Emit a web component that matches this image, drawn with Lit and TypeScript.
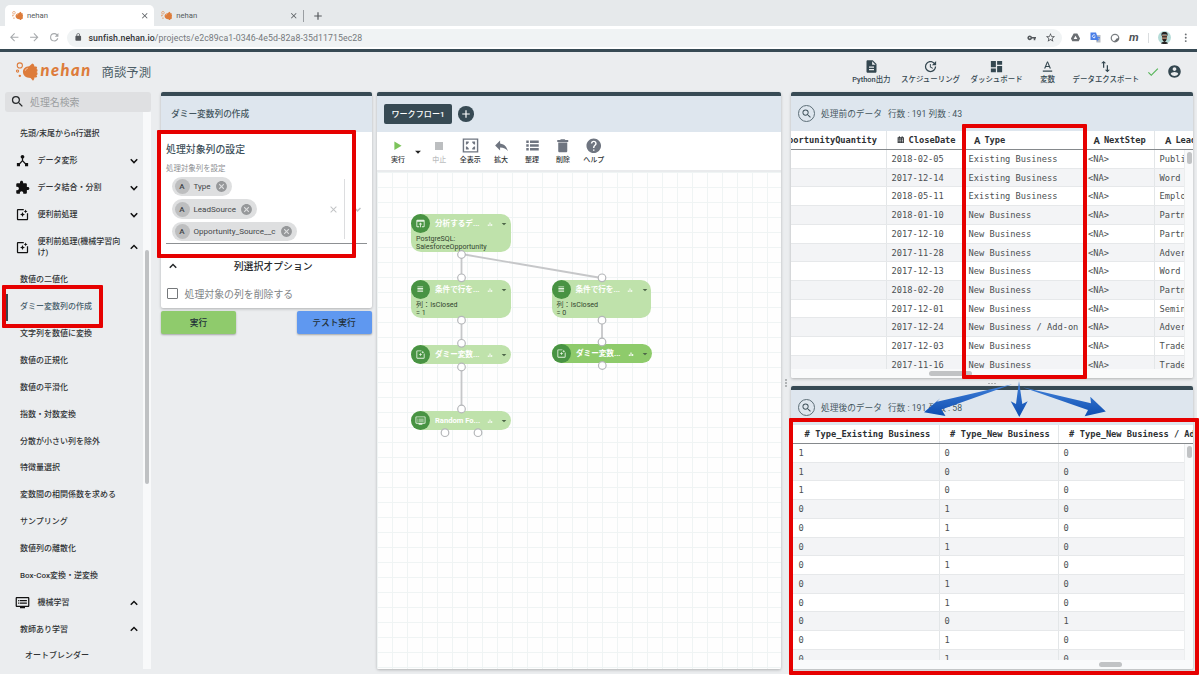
import { LitElement, css, html, svg } from 'lit'
import { customElement, property } from 'lit/decorators.js'
import { classMap } from 'lit/directives/class-map.js'

const ICONS: Record<string, string> = {
  search: 'M15.5 14h-.79l-.28-.27A6.471 6.471 0 0 0 16 9.5 6.5 6.5 0 1 0 9.5 16c1.61 0 3.09-.59 4.23-1.57l.27.28v.79l5 4.99L20.49 19l-4.99-5zm-6 0C7.01 14 5 11.99 5 9.5S7.01 5 9.5 5 14 7.01 14 9.5 11.99 14 9.5 14z',
  file: 'M14 2H6c-1.1 0-1.99.9-1.99 2L4 20c0 1.1.89 2 1.99 2H18c1.1 0 2-.9 2-2V8l-6-6zm2 16H8v-2h8v2zm0-4H8v-2h8v2zm-3-5V3.5L18.5 9H13z',
  schedule: 'M21 10.12h-6.78l2.74-2.82c-2.73-2.7-7.15-2.8-9.88-.1-2.73 2.71-2.73 7.08 0 9.79s7.15 2.71 9.88 0C18.32 15.65 19 14.08 19 12.1h2c0 1.98-.88 4.55-2.64 6.29-3.51 3.48-9.21 3.48-12.72 0-3.5-3.47-3.53-9.11-.02-12.58s9.14-3.47 12.65 0L21 3v7.12zM12.5 8v4.25l3.5 2.08-.72 1.21L11 13V8h1.5z',
  dashboard: 'M3 13h8V3H3v10zm0 8h8v-6H3v6zm10 0h8V11h-8v10zm0-18v6h8V3h-8z',
  variable: 'M4.500 18.500v2h15v-2h-15zM9.500 12.800h5l.9 2.200h2.100L12.750 4h-1.500L6.500 15h2.100l.9-2.200zM12 5.980L13.870 11h-3.740L12 5.980z',
  transfer: 'M9 3L5 6.99h3V14h2V6.99h3L9 3zm7 14.01V10h-2v7.01h-3L15 21l4-3.99h-3z',
  check: 'M9 16.17L4.83 12l-1.42 1.41L9 19 21 7l-1.41-1.41z',
  account: 'M12 2C6.48 2 2 6.48 2 12s4.48 10 10 10 10-4.48 10-10S17.52 2 12 2zm0 3c1.66 0 3 1.34 3 3s-1.34 3-3 3-3-1.34-3-3 1.34-3 3-3zm0 14.2c-2.5 0-4.71-1.28-6-3.22.03-1.99 4-3.08 6-3.08 1.99 0 5.97 1.09 6 3.08-1.29 1.94-3.5 3.22-6 3.22z',
  puzzle: 'M20.5 11H19V7c0-1.1-.9-2-2-2h-4V3.5C13 2.12 11.88 1 10.5 1S8 2.12 8 3.5V5H4c-1.1 0-1.99.9-1.99 2v3.8H3.5c1.49 0 2.7 1.21 2.7 2.7s-1.21 2.7-2.7 2.7H2V20c0 1.1.9 2 2 2h3.8v-1.5c0-1.49 1.21-2.7 2.7-2.7 1.49 0 2.7 1.21 2.7 2.7V22H17c1.1 0 2-.9 2-2v-4h1.5c1.38 0 2.5-1.12 2.5-2.5S21.88 11 20.5 11z',
  hub: 'M17 16l-4-4V8.82C14.16 8.4 15 7.3 15 6c0-1.66-1.34-3-3-3S9 4.34 9 6c0 1.3.84 2.4 2 2.82V12l-4 4H3v5h5v-3.05l4-4.2 4 4.2V21h5v-5h-4z',
  filter: 'M19.02 10v9H5V5h9V3H5.02c-1.1 0-2 .9-2 2v14c0 1.1.9 2 2 2H19c1.1 0 2-.9 2-2v-9h-1.98zM17 10l.94-2.06L20 7l-2.06-.94L17 4l-.94 2.06L14 7l2.06.94zm-3.75.75L12 8l-1.25 2.75L8 12l2.75 1.25L12 16l1.25-2.75L16 12z',
  monitor: 'M21 3H3c-1.1 0-2 .9-2 2v12c0 1.1.9 2 2 2h5v2h8v-2h5c1.1 0 1.99-.9 1.99-2L23 5c0-1.1-.9-2-2-2zm0 14H3V5h18v12zm-2-9H8v2h11V8zm0 4H8v2h11v-2zM7 8H5v2h2V8zm0 4H5v2h2v-2z',
  down: 'M16.59 8.09L12 12.67 7.41 8.09 5.5 10l6.5 6.5 6.5-6.5z',
  up: 'M12 7.5L5.5 14l1.91 1.91L12 11.33l4.59 4.58L18.5 14z',
  cancel: 'M12 2C6.47 2 2 6.47 2 12s4.47 10 10 10 10-4.47 10-10S17.53 2 12 2zm5 13.59L15.59 17 12 13.41 8.41 17 7 15.59 10.59 12 7 8.41 8.41 7 12 10.59 15.59 7 17 8.41 13.41 12 17 15.59z',
  close: 'M19 6.41L17.59 5 12 10.59 6.41 5 5 6.41 10.59 12 5 17.59 6.41 19 12 13.41 17.59 19 19 17.59 13.41 12z',
  reply: 'M10 9V5l-7 7 7 7v-4.1c5 0 8.5 1.6 11 5.1-1-5-4-10-11-11z',
  list: 'M2 14h4v-4H2v4zm0 6h4v-4H2v4zM2 8h4V4H2v4zm6 6h14v-4H8v4zm0 6h14v-4H8v4zM8 4v4h14V4H8z',
  trash: 'M5 20c0 1.1.9 2 2 2h10c1.1 0 2-.9 2-2V7H5v13zM20.5 3H16l-1-1H9L8 3H3.500v3h17V3z',
  help: 'M12 2C6.48 2 2 6.48 2 12s4.48 10 10 10 10-4.48 10-10S17.52 2 12 2zm1 17h-2v-2h2v2zm2.07-7.75l-.9.92C13.45 12.9 13 13.5 13 15h-2v-.5c0-1.1.45-2.1 1.17-2.83l1.24-1.26c.37-.36.59-.86.59-1.41 0-1.1-.9-2-2-2s-2 .9-2 2H8c0-2.21 1.79-4 4-4s4 1.79 4 4c0 .88-.36 1.68-.93 2.25z',
  play: 'M5 3v18l15-9z',
  stop: 'M4 4h16v16H4z',
  fit: 'M1 2h22v20H1V2zm2 2v16h18V4H3zm2.500 2.500h4V8L7 10.500H5.500v-4zm9 0h4v4H17L14.500 8V6.500zm-9 7H7L9.500 16v1.500h-4v-4zm11.500 0h1.500v4h-4V16l2.500-2.500z',
  plus: 'M19.5 13.2h-6.3v6.3h-2.4v-6.3H4.5v-2.4h6.3V4.5h2.4v6.3h6.3z',
  caret: 'M5 9l7 7 7-7z',
  back: 'M20 11H7.83l5.59-5.59L12 4l-8 8 8 8 1.41-1.41L7.83 13H20v-2z',
  forward: 'M12 4l-1.41 1.41L16.17 11H4v2h12.17l-5.58 5.59L12 20l8-8z',
  refresh: 'M17.65 6.35A7.958 7.958 0 0 0 12 4a8 8 0 1 0 7.73 10h-2.08A5.99 5.99 0 0 1 12 18a6 6 0 1 1 0-12c1.66 0 3.14.69 4.22 1.78L13 11h7V4l-2.35 2.35z',
  lock: 'M18 8h-1V6c0-2.76-2.24-5-5-5S7 3.24 7 6v2H6c-1.1 0-2 .9-2 2v10c0 1.1.9 2 2 2h12c1.1 0 2-.9 2-2V10c0-1.1-.9-2-2-2zM15.1 8H8.9V6c0-1.71 1.39-3.1 3.1-3.1s3.1 1.39 3.1 3.1v2z',
  key: 'M12.65 10A5.99 5.99 0 0 0 7 6c-3.31 0-6 2.69-6 6s2.69 6 6 6a5.99 5.99 0 0 0 5.65-4H17v4h4v-4h2v-4H12.65zM7 14a2 2 0 1 1 0-4 2 2 0 0 1 0 4z',
  star: 'M22 9.24l-7.19-.62L12 2 9.19 8.63 2 9.24l5.46 4.73L5.82 21 12 17.27 18.18 21l-1.63-7.03L22 9.24zM12 15.4l-3.76 2.27 1-4.28-3.32-2.88 4.38-.38L12 6.1l1.71 4.04 4.38.38-3.32 2.88 1 4.28L12 15.4z',
  more: 'M12 7a2 2 0 1 0 0-4 2 2 0 0 0 0 4zm0 3a2 2 0 1 0 0 4 2 2 0 0 0 0-4zm0 7a2 2 0 1 0 0 4 2 2 0 0 0 0-4z',
  open: 'M19 4H5a2 2 0 0 0-2 2v12a2 2 0 0 0 2 2h4v-2H5V8h14v10h-4v2h4c1.1 0 2-.9 2-2V6a2 2 0 0 0-2-2zm-7 6l-4 4h3v6h2v-6h3l-4-4z',
  lines: 'M4 4h16v2.500H4zM4 8.500h16V11H4zM4 13h16v2.500H4zM4 17.500h16V20H4z',
  bars: 'M3 20v-6h5v6zM9.5 20V6h5v14zM16 20v-8h5v8z',
  calendar: 'M6 1h3v3h6V1h3v3h4v18H2V4h4zM5 8v3h3V8zm5.5 0v3h3V8zM16 8v3h3V8zM5 13v2.5h3V13zm5.500 0v2.500h3V13zM16 13v2.500h3V13zM5 17.500V20h3v-2.500zm5.500 0V20h3v-2.500zm5.500 0V20h3v-2.500z',
  drive: 'M8 3h8l6 11-3 6H5l-3-6zM12 8l-4 7h8z',
};

const icon = (name: string, size: number) => html`
  <svg class="icon" width=${size} height=${size} viewBox="0 0 24 24" fill="currentColor">
    <path fill-rule="evenodd" d=${ICONS[name]}></path>
  </svg>`;

const fish = (size: number) => html`
  <svg class="icon" width=${size} height=${size * 0.87} viewBox="0 0 62 54">
    <g fill="none" stroke="#dd7c3b" stroke-width="3">
      <circle cx="11" cy="10" r="7.500"></circle>
      <circle cx="4.500" cy="26" r="3.200"></circle>
    </g>
    <circle cx="11" cy="40" r="3.500" fill="#dd7c3b"></circle>
    <path fill="#dd7c3b" d="M20 28c0-9 7-15 18-16l9-8c4 1 6 4 6 9h5c2 1 3 2 3 4l-2 3 3 2v5l-3 2 3 2v5l-3 2 2 3c0 2-1 3-3 4h-5c0 4-1 7-4 9l-7-8c-14 0-22-8-22-18z"></path>
    <path fill="none" stroke="#f6d5bd" stroke-width="2.500" d="M27 25c1-4 3-6 7-7"></path>
  </svg>`;

@customElement('data-table')
export class DataTable extends LitElement {
  @property({ attribute: false }) columns: { icon: string, label: string, width: number }[] = [];
  @property({ attribute: false }) rows: string[][] = [];
  @property({ type: Number }) thumbLeft = 0;
  @property({ type: Number }) thumbWidth = 0;

  renderMark(mark: string) {
    if (mark === 'calendar') return icon('calendar', 7.5);
    return mark ? html`<span class=${mark === 'A' ? 'mark' : 'hash'}>${mark}</span>` : '';
  }

  render() {
    const template = `grid-template-columns: ${this.columns.map((c) => c.width + 'px').join(' ')}`;
    return html`
      <div class="head row" style=${template}>
        ${this.columns.map((c) => html`
          <div class=${classMap({ cell: true, th: true, cut: !c.icon })}>${this.renderMark(c.icon)}<span>${c.label}</span></div>
        `)}
      </div>
      <div class="view">
        <div class="rows">
          ${this.rows.map((row) => html`
            <div class="row line" style=${template}>
              ${row.map((value) => html`<div class="cell">${value}</div>`)}
            </div>
          `)}
        </div>
        <div class="vbar"><div class="vthumb"></div></div>
      </div>
      <div class="hbar">
        <div class="hthumb" style=${`margin-left: ${this.thumbLeft}px; width: ${this.thumbWidth}px`}></div>
      </div>
    `;
  }

  static styles = css`
    :host {
      display: flex;
      flex: 1;
      flex-direction: column;
      min-height: 0;
      overflow: hidden;
      font: 8.7px "DejaVu Sans Mono", "Liberation Mono", monospace;
      color: #4b4f52;
    }
    .row {
      display: grid;
    }
    .cell {
      border-left: 1px solid #e3e6e8;
      box-sizing: border-box;
      overflow: hidden;
      padding-left: 4.5px;
      white-space: nowrap;
    }
    .cell:first-child {
      border-left: none;
      padding-left: 8px;
    }
    .head {
      border-bottom: 1.5px solid #85898c;
      color: #2c3033;
      flex: none;
      font-weight: bold;
      height: 18px;
      line-height: 19px;
    }
    .th, .th:first-child {
      align-items: center;
      display: flex;
      gap: 4px;
      padding-left: 10px;
    }
    .th:first-child {
      padding-left: 14px;
    }
    .th.cut {
      justify-content: flex-end;
      padding: 0 9px 0 0;
    }
    .mark {
      font: bold 9.5px Roboto, sans-serif;
    }
    .hash {
      margin-right: 1.5px;
    }
    .view {
      display: flex;
      flex: 1;
      min-height: 0;
    }
    .rows {
      flex: 1;
      overflow: hidden;
    }
    .line {
      background: white;
      border-bottom: 1px solid #e6e8ea;
      box-sizing: border-box;
      height: 18.72px;
      line-height: 18.5px;
    }
    .line:nth-child(even) {
      background: #f3f4f6;
    }
    .vbar {
      background: #f9fafb;
      border-left: 1px solid #eceeef;
      box-sizing: border-box;
      flex: none;
      padding: 2px;
      width: 9.5px;
    }
    .vthumb {
      background: #c1c3c5;
      border-radius: 3px;
      height: 11.5px;
      width: 5px;
    }
    .hbar {
      background: #f9fafb;
      box-sizing: border-box;
      flex: none;
      height: 9px;
      padding-top: 2px;
    }
    .hthumb {
      background: #c1c3c5;
      border-radius: 3px;
      height: 5px;
    }
  `;
}

@customElement('app-root')
export class AppRoot extends LitElement {
  actions = [
    ['file', 'Python出力'],
    ['schedule', 'スケジューリング'],
    ['dashboard', 'ダッシュボード'],
    ['variable', '変数'],
    ['transfer', 'データエクスポート'],
  ];

  menu = [
    { label: '先頭/末尾からn行選択' },
    { label: 'データ変形', icon: 'hub', arrow: 'down' },
    { label: 'データ結合・分割', icon: 'puzzle', arrow: 'down' },
    { label: '便利前処理', icon: 'filter', arrow: 'down' },
    { label: '便利前処理(機械学習向け)', icon: 'filter', arrow: 'up', tall: true },
    { label: '数値の二値化' },
    { label: 'ダミー変数列の作成', active: true },
    { label: '文字列を数値に変換' },
    { label: '数値の正規化' },
    { label: '数値の平滑化' },
    { label: '指数・対数変換' },
    { label: '分散が小さい列を除外' },
    { label: '特徴量選択' },
    { label: '変数間の相関係数を求める' },
    { label: 'サンプリング' },
    { label: '数値列の離散化' },
    { label: 'Box-Cox変換・逆変換' },
    { label: '機械学習', icon: 'monitor', arrow: 'up' },
    { label: '教師あり学習', arrow: 'up' },
    { label: 'オートブレンダー', nested: true },
  ];

  tools = [
    { icon: 'stop', label: '中止', kind: 'disabled', size: 12 },
    { icon: 'fit', label: '全表示', kind: '', size: 17 },
    { icon: 'reply', label: '拡大', kind: '', size: 17 },
    { icon: 'list', label: '整理', kind: '', size: 15 },
    { icon: 'trash', label: '削除', kind: '', size: 15.5 },
    { icon: 'help', label: 'ヘルプ', kind: '', size: 17.5 },
  ];

  // positions are relative to the top left corner of the canvas
  nodes = [
    { x: 34.5, y: 42, h: 38, icon: 'open', title: '分析するデ...', note: ['PostgreSQL:', 'SalesforceOpportunity'] },
    { x: 34.5, y: 108, h: 37.5, icon: 'lines', title: '条件で行を...', note: ['列：IsClosed', '= 1'] },
    { x: 175, y: 108, h: 37.5, icon: 'lines', title: '条件で行を...', note: ['列：IsClosed', '= 0'] },
    { x: 34.5, y: 173.3, h: 19, icon: 'filter', title: 'ダミー変数...', note: [] },
    { x: 175.5, y: 172.3, h: 19, icon: 'filter', title: 'ダミー変数...', note: [], active: true },
    { x: 34.5, y: 239, h: 19, icon: 'monitor', title: 'Random Fo...', note: [] },
  ];

  links = [[84.5, 82, 84.5, 106], [84.5, 82, 224.5, 106], [84.5, 148, 84.5, 171], [225, 148, 225, 170], [84.5, 195, 84.5, 237]];

  ports = [
    [84.5, 82.5], [84.5, 105.8], [225, 105.8], [84.5, 148.2], [225, 148.2], [84.5, 171.3],
    [225, 170], [84.5, 195], [225.3, 193.5], [84.5, 237], [68, 260.7], [101, 260.7],
  ];

  beforeColumns = [
    { icon: '', label: 'OpportunityQuantity', width: 95.5 },
    { icon: 'calendar', label: 'CloseDate', width: 77 },
    { icon: 'A', label: 'Type', width: 119.5 },
    { icon: 'A', label: 'NextStep', width: 71.5 },
    { icon: 'A', label: 'LeadSource', width: 80 },
  ];

  beforeRows = [
    ['', '2018-02-05', 'Existing Business', '<NA>', 'Public Relations'],
    ['', '2017-12-14', 'Existing Business', '<NA>', 'Word of mouth'],
    ['', '2018-05-11', 'Existing Business', '<NA>', 'Employee Referral'],
    ['', '2018-01-10', 'New Business', '<NA>', 'Partner'],
    ['', '2017-12-10', 'New Business', '<NA>', 'Partner'],
    ['', '2017-11-28', 'New Business', '<NA>', 'Advertisement'],
    ['', '2017-12-13', 'New Business', '<NA>', 'Word of mouth'],
    ['', '2018-02-20', 'New Business', '<NA>', 'Partner'],
    ['', '2017-12-01', 'New Business', '<NA>', 'Seminar'],
    ['', '2017-12-24', 'New Business / Add-on', '<NA>', 'Advertisement'],
    ['', '2017-12-03', 'New Business', '<NA>', 'Trade Show'],
    ['', '2017-11-16', 'New Business', '<NA>', 'Trade Show'],
  ];

  afterColumns = [
    { icon: '#', label: 'Type_Existing Business', width: 148.5 },
    { icon: '#', label: 'Type_New Business', width: 119 },
    { icon: '#', label: 'Type_New Business / Add-on', width: 160 },
  ];

  afterRows = ['100', '100', '100', '010', '010', '010', '010', '010', '010', '001', '010', '010'].map((r) => r.split(''));

  renderTab(active: boolean) {
    return html`
      <div class=${classMap({ tab: true, active })}>
        ${fish(11)}<span class="tab-name">nehan</span>${icon('close', 9.5)}
      </div>
    `;
  }

  renderBrowser() {
    return html`
      <div class="tabs">
        ${this.renderTab(true)}
        ${this.renderTab(false)}
        <span class="tab-line"></span>
        ${icon('plus', 12)}
      </div>
      <div class="nav">
        <div class="nav-buttons">${icon('back', 12.5)}${icon('forward', 12.5)}${icon('refresh', 12.5)}</div>
        <div class="url">
          ${icon('lock', 8.5)}
          <span class="address"><b>sunfish.nehan.io</b>/projects/e2c89ca1-0346-4e5d-82a8-35d11715ec28</span>
          ${icon('key', 9.5)}${icon('star', 11)}
        </div>
        <div class="extensions">
          <span class="gray">${icon('drive', 11)}</span>
          <svg class="icon" width="11" height="11" viewBox="0 0 22 22">
            <path fill="#b9bec4" d="M9 6h12v15H13z"></path>
            <path fill="#4a7fe8" d="M1 1h11l5 15H1z"></path>
            <path fill="none" stroke="white" stroke-width="1.6" d="M10.5 7a3 3 0 1 0 0 3H8"></path>
            <path fill="none" stroke="#4a7fe8" stroke-width="1.5" d="M13 11h7M16.5 9v2M14 18c3-1 4-4 4.5-7"></path>
          </svg>
          <svg class="icon" width="10" height="10" viewBox="0 0 20 20">
            <circle cx="10" cy="10" r="7.5" fill="none" stroke="#7b7f83" stroke-width="2.5"></circle>
            <path fill="#6a6e72" d="M7 17c5 2 11-1 11-7l-5 1-2 3z"></path>
          </svg>
          <span class="letter">m</span>
          <span class="nav-line"></span>
          <svg class="icon" width="13" height="13" viewBox="0 0 26 26">
            <circle cx="13" cy="13" r="13" fill="#b5dcd8"></circle>
            <path fill="#a07c66" d="M8 8h10v8l-5 6-5-5z"></path>
            <path fill="#262322" d="M7 10c-1-7 2-8 6-8s7 1 6 8l-2-3H9zM8 10.5h10v2H8zM9 16h8l-1 4-3 2-3-2zM6 25c1-3 3-3 7-3s6 0 7 3c-4 1.500-10 1.500-14 0z"></path>
          </svg>
          <span class="gray">${icon('more', 11.5)}</span>
        </div>
      </div>
    `;
  }

  renderHeader() {
    return html`
      <header class="header">
        ${fish(21.5)}
        <span class="logo">nehan</span>
        <span class="project">商談予測</span>
        <div class="actions">
          ${this.actions.map(([name, label]) => html`
            <div class="action">${icon(name, 15)}<span>${label}</span></div>
          `)}
        </div>
        <span class="saved">${icon('check', 14)}</span>
        ${icon('account', 15)}
      </header>
    `;
  }

  renderSidebar() {
    return html`
      <aside class="sidebar">
        <div class="search">${icon('search', 15)}<span>処理名検索</span></div>
        <div class="menu-wrap">
          <div class="menu">
            ${this.menu.map((item) => html`
              <div class=${classMap({ item: true, group: !!item.icon, tall: !!item.tall, current: !!item.active, nested: !!item.nested })}>
                ${item.icon ? icon(item.icon, 15) : ''}
                <span class="item-label">${item.label}</span>
                ${item.arrow ? icon(item.arrow, 14) : ''}
              </div>
            `)}
          </div>
          <div class="menu-track"><div class="menu-thumb"></div></div>
        </div>
      </aside>
    `;
  }

  renderSettings() {
    return html`
      <section class="settings">
        <div class="card">
          <div class="card-head settings-head">ダミー変数列の作成</div>
          <div class="form">
            <h3 class="form-title">処理対象列の設定</h3>
            <div class="form-label">処理対象列を設定</div>
            <div class="select">
              <div class="chips">
                ${['Type', 'LeadSource', 'Opportunity_Source__c'].map((name) => html`
                  <div class="chip"><span class="chip-mark">A</span><span>${name}</span>${icon('cancel', 13)}</div>
                `)}
              </div>
              <span class="clear">${icon('close', 11)}</span>
              <span class="divider"></span>
              <span class="clear">${icon('down', 13)}</span>
            </div>
            <div class="option-head">${icon('up', 14)}<span class="option-title">列選択オプション</span></div>
            <div class="option"><span class="box"></span>処理対象の列を削除する</div>
          </div>
        </div>
        <div class="buttons">
          <button class="button run">実行</button>
          <button class="button test">テスト実行</button>
        </div>
      </section>
    `;
  }

  renderNode(node: any) {
    return html`
      <div class=${classMap({ node: true, selected: !!node.active })} style=${`left: ${node.x}px; top: ${node.y}px; height: ${node.h}px`}>
        <div class="node-head">
          <span class="node-icon">${icon(node.icon, node.icon === 'lines' ? 8.5 : 11)}</span>
          <span class="node-title">${node.title}</span>
          <span class="node-chart">${icon('bars', 6)}</span>
          ${icon('caret', 8)}
        </div>
        <div class="node-note">${node.note.map((line: string) => html`<div>${line}</div>`)}</div>
      </div>
    `;
  }

  renderWorkflow() {
    return html`
      <section class="card workflow">
        <div class="card-head flow-head">
          <span class="flow-tab">ワークフロー1</span>
          <span class="flow-add">${icon('plus', 12)}</span>
        </div>
        <div class="toolbar">
          <div class="tool go"><span class="tool-icon">${icon('play', 11.5)}</span><span>実行</span></div>
          <span class="tool-caret">${icon('caret', 10)}</span>
          ${this.tools.map((tool) => html`
            <div class="tool ${tool.kind}"><span class="tool-icon">${icon(tool.icon, tool.size)}</span><span>${tool.label}</span></div>
          `)}
        </div>
        <div class="canvas">
          <svg class="links">
            ${this.links.map(([x1, y1, x2, y2]) => svg`<line x1=${x1} y1=${y1} x2=${x2} y2=${y2}></line>`)}
          </svg>
          ${this.nodes.map((node) => this.renderNode(node))}
          <svg class="links">
            ${this.ports.map(([x, y]) => svg`<circle cx=${x} cy=${y} r="3.8"></circle>`)}
          </svg>
        </div>
      </section>
    `;
  }

  renderTables() {
    return html`
      <section class="tables">
        <div class="card before">
          <div class="card-head table-head">
            <span class="lens">${icon('search', 11.5)}</span><span>処理前のデータ</span><span>行数 : 191 列数 : 43</span>
          </div>
          <data-table .columns=${this.beforeColumns} .rows=${this.beforeRows} .thumbLeft=${138} .thumbWidth=${43}></data-table>
        </div>
        <div class="grip"><i></i><i></i><i></i></div>
        <div class="card after">
          <div class="card-head table-head">
            <span class="lens">${icon('search', 11.5)}</span><span>処理後のデータ</span><span>行数 : 191 列数 : 58</span>
          </div>
          <data-table .columns=${this.afterColumns} .rows=${this.afterRows} .thumbLeft=${308.5} .thumbWidth=${22.5}></data-table>
        </div>
      </section>
    `;
  }

  renderMarkers() {
    return html`
      <div class="marker marker-menu"></div>
      <div class="marker marker-form"></div>
      <div class="marker marker-type"></div>
      <div class="marker marker-result"></div>
      <svg class="arrows" viewBox="915 378 200 42">
        <defs>
          <linearGradient id="blue" x1="0" y1="0" x2="0" y2="1">
            <stop offset="0" stop-color="#3f7fd8"></stop>
            <stop offset="1" stop-color="#0d4db0"></stop>
          </linearGradient>
        </defs>
        <path d="M1012.3 384.3L937 401.8 940.3 398.2 924 412.2 945.5 415.9 941.5 409.5z"></path>
        <path d="M1019 381L1016 404 1010.7 401.2 1019.3 417 1027.7 401.2 1022.3 404z"></path>
        <path d="M1022.7 387.3L1088 410 1084.7 416.2 1105.8 411.5 1090.3 396.8 1091 403.2z"></path>
      </svg>
    `;
  }

  render() {
    return html`
      <div class="page">
        ${this.renderBrowser()}
        <div class="app">
          ${this.renderHeader()}
          <main class="main">
            ${this.renderSidebar()}
            ${this.renderSettings()}
            ${this.renderWorkflow()}
            <div class="grip side"><i></i><i></i><i></i></div>
            ${this.renderTables()}
          </main>
        </div>
      </div>
      ${this.renderMarkers()}
    `;
  }

  static styles = css`
    :host {
      background: white;
      display: block;
      font-family: Roboto, "Noto Sans CJK JP", sans-serif;
      height: 675px;
      overflow: hidden;
      position: relative;
      width: 1200px;
    }
    .icon {
      display: block;
      flex: none;
    }
    .page {
      display: flex;
      flex-direction: column;
      height: 673.7px;
      width: 1197.3px;
    }

    .tabs {
      align-items: center;
      background: #e6e9eb;
      box-sizing: border-box;
      color: #55595d;
      display: flex;
      flex: none;
      height: 26px;
      padding: 5px 0 0 5px;
    }
    .tab {
      align-items: center;
      border-radius: 5px 5px 0 0;
      box-sizing: border-box;
      display: flex;
      font-size: 7.7px;
      height: 21px;
      padding: 0 5px 0 7px;
      width: 149.2px;
    }
    .active {
      background: white;
    }
    .tab-name {
      flex: 1;
      margin-left: 4px;
    }
    .tab-line {
      background: #9a9ea2;
      height: 12px;
      margin-right: 7.5px;
      width: 1px;
    }
    .nav {
      align-items: center;
      background: white;
      display: flex;
      flex: none;
      height: 23px;
    }
    .nav-buttons {
      color: #a6a9ac;
      display: flex;
      gap: 7.5px;
      padding: 0 7px 0 7.5px;
    }
    .url {
      align-items: center;
      background: #f0f3f4;
      border-radius: 9px;
      box-sizing: border-box;
      color: #54585c;
      display: flex;
      gap: 9px;
      height: 18px;
      padding: 0 6px 0 7px;
      width: 995px;
    }
    .address {
      color: #74787b;
      flex: 1;
      font-size: 8.75px;
      letter-spacing: 0.085px;
      margin-left: -3px;
    }
    .address b {
      color: #303336;
      font-weight: 500;
    }
    .extensions {
      align-items: center;
      display: flex;
      flex: 1;
      gap: 9px;
      padding-left: 8px;
    }
    .gray {
      color: #6b6f73;
    }
    .letter {
      color: #505457;
      font: italic bold 11.5px/12px Roboto, sans-serif;
      margin-bottom: 2px;
    }
    .nav-line {
      background: #dadddf;
      height: 10px;
      width: 1px;
    }

    .app {
      background: #ebedef;
      border-top: 3px solid #374a54;
      display: flex;
      flex: 1;
      flex-direction: column;
      min-height: 0;
    }
    .header {
      align-items: center;
      box-sizing: border-box;
      color: #344750;
      display: flex;
      flex: none;
      height: 40px;
      padding: 0 15px 1px 16px;
    }
    .logo {
      color: #dd7c3b;
      font: italic 900 16.5px/20px Lato, sans-serif;
      letter-spacing: 1.5px;
      margin: -3px 0 0 3px;
      width: 53px;
    }
    .project {
      color: #4b5d66;
      font-size: 12.4px;
      margin-left: 8px;
    }
    .actions {
      display: flex;
      flex: 1;
      gap: 10.5px;
      justify-content: flex-end;
      padding-top: 1px;
    }
    .action {
      align-items: center;
      display: flex;
      flex-direction: column;
      font-size: 7.45px;
      font-weight: 500;
      line-height: 11px;
      min-width: 29px;
      white-space: nowrap;
    }
    .saved {
      color: #56b558;
      margin: 0 7.5px 0 6.5px;
    }

    .main {
      display: flex;
      flex: 1;
      min-height: 0;
    }
    .sidebar {
      display: flex;
      flex-direction: column;
      padding-left: 5px;
      width: 146px;
    }
    .search {
      align-items: center;
      background: #dfe0e2;
      border-radius: 3px;
      color: #9b9ea0;
      display: flex;
      flex: none;
      font-size: 9.9px;
      gap: 5.5px;
      height: 19.5px;
      padding-left: 4.5px;
    }
    .search .icon {
      color: #26292b;
    }
    .menu-wrap {
      display: flex;
      height: 557.5px;
    }
    .menu {
      color: #303335;
      flex: 1;
      font-size: 8px;
      font-weight: 500;
      overflow: hidden;
      padding-top: 9.2px;
    }
    .item {
      align-items: center;
      border-left: 3px solid transparent;
      box-sizing: border-box;
      display: flex;
      height: 26.86px;
      padding: 0 1px 0 12px;
      width: 137px;
    }
    .item-label {
      flex: 1;
      line-height: 11.7px;
    }
    .group {
      padding-left: 7px;
    }
    .group .item-label {
      margin-left: 7.5px;
    }
    .item .icon {
      color: #111;
    }
    .tall {
      height: 38.7px;
    }
    .nested {
      padding-left: 17px;
    }
    .current {
      border-left-color: #37474f;
      color: #48606c;
    }
    .menu-track {
      background: #f8f9fa;
      padding: 138.5px 2px 0;
      width: 4.5px;
    }
    .menu-thumb {
      background: #bfc1c3;
      border-radius: 3px;
      height: 234px;
    }

    .card {
      background: white;
      border-radius: 2px;
      box-shadow: 0 1px 3px rgba(0, 0, 0, 0.25);
      display: flex;
      flex-direction: column;
      overflow: hidden;
    }
    .card-head {
      align-items: center;
      background: #dee6ee;
      border-top: 4px solid #374a54;
      box-sizing: border-box;
      color: #44565f;
      display: flex;
      flex: none;
      height: 39.5px;
    }
    .settings {
      margin-left: 10px;
      width: 210.5px;
    }
    .settings-head {
      font-size: 8.7px;
      font-weight: 500;
      padding: 0 0 0 10px;
    }
    .form {
      height: 176.5px;
      padding: 0 5px;
    }
    .form-title {
      color: #3d505a;
      font-size: 9.9px;
      font-weight: 500;
      line-height: 14px;
      margin: 11px 0 0;
    }
    .form-label {
      color: #8a8d90;
      font-size: 7.45px;
      line-height: 10px;
      margin-top: 7px;
    }
    .select {
      align-items: center;
      border-bottom: 1px solid #8d9093;
      box-sizing: border-box;
      display: flex;
      height: 70px;
      padding: 4px 3px 2px 6px;
    }
    .chips {
      align-items: flex-start;
      display: flex;
      flex: 1;
      flex-direction: column;
      gap: 3.1px;
    }
    .chip {
      align-items: center;
      background: #dedfe0;
      border-radius: 10px;
      color: #44474a;
      display: flex;
      font-size: 8.05px;
      gap: 4px;
      height: 19.3px;
      padding: 0 4px 0 2.5px;
    }
    .chip .icon {
      color: #96989a;
    }
    .chip-mark {
      background: #bdbebf;
      border-radius: 50%;
      font-size: 8px;
      font-weight: 500;
      height: 15px;
      line-height: 15px;
      text-align: center;
      width: 15px;
    }
    .clear {
      color: #c0c2c4;
    }
    .divider {
      background: #dcdddf;
      height: 60px;
      margin: 0 5.5px;
      width: 1px;
    }
    .option-head {
      align-items: center;
      color: #26292b;
      display: flex;
      font-size: 9.9px;
      font-weight: 500;
      height: 14px;
      margin-top: 15px;
    }
    .option-title {
      flex: 1;
      text-align: center;
    }
    .option {
      align-items: center;
      color: #808386;
      display: flex;
      font-size: 9.9px;
      gap: 7px;
      height: 14px;
      margin: 14px 0 0 1px;
    }
    .box {
      border: 1.5px solid #75787b;
      border-radius: 1px;
      height: 8.5px;
      width: 8.5px;
    }
    .buttons {
      display: flex;
      justify-content: space-between;
      margin-top: 2.7px;
    }
    .button {
      border: none;
      border-radius: 2px;
      box-shadow: 0 1px 2px rgba(0, 0, 0, 0.3);
      color: #223038;
      font: 500 8.7px Roboto, "Noto Sans CJK JP", sans-serif;
      height: 23.5px;
      padding: 0;
      width: 75px;
    }
    .run {
      background: #8fcb6c;
    }
    .test {
      background: #5f98f0;
    }

    .workflow {
      height: 577px;
      margin-left: 5px;
      width: 404.5px;
    }
    .flow-head {
      gap: 6px;
      padding: 0 0 0 7.5px;
    }
    .flow-tab {
      background: #374a54;
      border-radius: 2px;
      color: white;
      font-size: 8.1px;
      font-weight: 500;
      height: 19.5px;
      line-height: 20px;
      text-align: center;
      width: 68px;
    }
    .flow-add {
      background: #374a54;
      border-radius: 50%;
      color: white;
      padding: 1.8px;
    }
    .toolbar {
      border-bottom: 2px solid #e9ebed;
      box-sizing: border-box;
      display: flex;
      flex: none;
      height: 40.5px;
      padding: 4.5px 0 0 6px;
    }
    .tool {
      align-items: center;
      color: #6f7580;
      display: flex;
      flex-direction: column;
      font-size: 7px;
      font-weight: 500;
      width: 30.9px;
    }
    .tool > span:last-child {
      color: #303335;
      line-height: 10px;
    }
    .tool-icon {
      align-items: center;
      display: flex;
      height: 19px;
    }
    .tool.go {
      color: #7cc35b;
    }
    .tool.disabled, .tool.disabled > span:last-child {
      color: #bcbec0;
    }
    .tool-caret {
      color: #222;
      margin: 11px -6px 0 0;
      width: 16.500px;
    }
    .canvas {
      background-color: #fefefe;
      background-image:
        linear-gradient(to right, #eff4f4 1px, transparent 1px),
        linear-gradient(to bottom, #eff4f4 1px, transparent 1px);
      background-size: 15px 15px;
      flex: 1;
      position: relative;
    }
    .links {
      height: 100%;
      left: 0;
      position: absolute;
      top: 0;
      width: 100%;
    }
    .links line {
      stroke: #c6c7c9;
      stroke-width: 1.8;
    }
    .links circle {
      fill: white;
      stroke: #b4b6b9;
      stroke-width: 1.2;
    }
    .node {
      background: #bfe2ab;
      border-radius: 10px;
      position: absolute;
      width: 99.5px;
    }
    .node.selected {
      background: #8ecb6b;
    }
    .node-head {
      align-items: center;
      color: #4d6648;
      display: flex;
      height: 19px;
    }
    .node-icon {
      align-items: center;
      background: #489343;
      border-radius: 50%;
      color: #e3f1df;
      display: flex;
      height: 19px;
      justify-content: center;
      width: 19px;
    }
    .node-title {
      color: white;
      font-size: 7.6px;
      font-weight: 700;
      line-height: 19px;
      margin-left: 5px;
      white-space: nowrap;
      width: 51.5px;
    }
    .node-chart {
      color: #eff8ea;
      margin-right: 7.5px;
    }
    .node-note {
      color: #33452f;
      font-size: 7.1px;
      line-height: 8.1px;
      margin-top: 1.5px;
      padding-left: 5px;
    }

    .grip {
      display: flex;
      gap: 1.5px;
    }
    .grip i {
      background: #a5a8aa;
      border-radius: 50%;
      height: 1.5px;
      width: 1.5px;
    }
    .tables .grip {
      align-items: flex-end;
      box-sizing: border-box;
      height: 8px;
      justify-content: center;
      padding-bottom: 2px;
    }
    .grip.side {
      align-items: center;
      flex-direction: column;
      height: 582px;
      justify-content: center;
      width: 9.5px;
    }
    .tables {
      width: 402.5px;
    }
    .before {
      height: 286px;
    }
    .after {
      height: 283px;
    }
    .table-head {
      font-size: 8.7px;
      gap: 6px;
      height: 39px;
      padding: 0 0 0 7.5px;
    }
    .lens {
      border: 1px solid #5d6e77;
      border-radius: 50%;
      padding: 1.8px;
    }

    .marker {
      border: 4.5px solid #e60000;
      border-radius: 1px;
      box-sizing: border-box;
      position: absolute;
    }
    .marker-menu {
      height: 43px;
      left: 2px;
      top: 284.5px;
      width: 101px;
    }
    .marker-form {
      height: 128px;
      left: 157px;
      top: 129.5px;
      width: 198.5px;
    }
    .marker-type {
      height: 255px;
      left: 962.3px;
      top: 124px;
      width: 124.5px;
    }
    .marker-result {
      height: 256.5px;
      left: 788.5px;
      top: 418.2px;
      width: 410px;
    }
    .arrows {
      height: 42px;
      left: 915px;
      position: absolute;
      top: 378px;
      width: 200px;
    }
    .arrows path {
      fill: url(#blue);
    }
  `;
}

declare global {
  interface HTMLElementTagNameMap {
    'app-root': AppRoot;
    'data-table': DataTable;
  }
}
